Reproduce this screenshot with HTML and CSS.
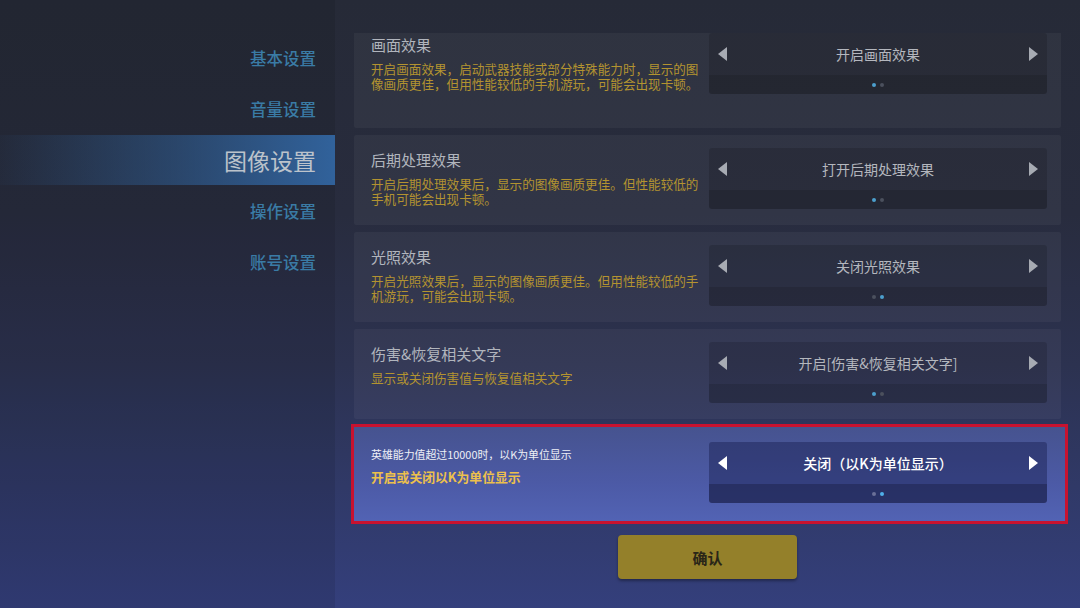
FILE: index.html
```html
<!DOCTYPE html>
<html lang="zh-CN">
<head>
<meta charset="UTF-8">
<meta name="viewport" content="width=device-width, initial-scale=1.0">
<title>设置 | 图像设置</title>
<link rel="stylesheet" href="styles.css">
</head>
<body>
<div class="layout">
<aside class="sidebar">
<nav class="nav">
<a class="nav-item" href="#">基本设置</a>
<a class="nav-item" href="#">音量设置</a>
<a class="nav-item active" href="#">图像设置</a>
<a class="nav-item" href="#">操作设置</a>
<a class="nav-item" href="#">账号设置</a>
</nav>
</aside>
<main class="panel">
<div class="settings-scroll">
<div class="settings-list">
<div class="setting tall">
<div class="setting-text">
<h3 class="setting-title">画面效果</h3>
<p class="setting-desc">开启画面效果，启动武器技能或部分特殊能力时，显示的图像画质更佳，但用性能较低的手机游玩，可能会出现卡顿。</p>
</div>
<div class="selector">
<div class="selector-main">
<svg class="arrow" viewBox="0 0 9 14"><polygon points="9,0 9,14 0,7"/></svg>
<span class="selector-value">开启画面效果</span>
<svg class="arrow" viewBox="0 0 9 14"><polygon points="0,0 0,14 9,7"/></svg>
</div>
<div class="selector-dots"><i class="dot on"></i><i class="dot"></i></div>
</div>
</div>
<div class="setting">
<div class="setting-text">
<h3 class="setting-title">后期处理效果</h3>
<p class="setting-desc">开启后期处理效果后，显示的图像画质更佳。但性能较低的手机可能会出现卡顿。</p>
</div>
<div class="selector">
<div class="selector-main">
<svg class="arrow" viewBox="0 0 9 14"><polygon points="9,0 9,14 0,7"/></svg>
<span class="selector-value">打开后期处理效果</span>
<svg class="arrow" viewBox="0 0 9 14"><polygon points="0,0 0,14 9,7"/></svg>
</div>
<div class="selector-dots"><i class="dot on"></i><i class="dot"></i></div>
</div>
</div>
<div class="setting">
<div class="setting-text">
<h3 class="setting-title">光照效果</h3>
<p class="setting-desc">开启光照效果后，显示的图像画质更佳。但用性能较低的手机游玩，可能会出现卡顿。</p>
</div>
<div class="selector">
<div class="selector-main">
<svg class="arrow" viewBox="0 0 9 14"><polygon points="9,0 9,14 0,7"/></svg>
<span class="selector-value">关闭光照效果</span>
<svg class="arrow" viewBox="0 0 9 14"><polygon points="0,0 0,14 9,7"/></svg>
</div>
<div class="selector-dots"><i class="dot"></i><i class="dot on"></i></div>
</div>
</div>
<div class="setting">
<div class="setting-text">
<h3 class="setting-title">伤害&amp;恢复相关文字</h3>
<p class="setting-desc">显示或关闭伤害值与恢复值相关文字</p>
</div>
<div class="selector">
<div class="selector-main">
<svg class="arrow" viewBox="0 0 9 14"><polygon points="9,0 9,14 0,7"/></svg>
<span class="selector-value">开启[伤害&amp;恢复相关文字]</span>
<svg class="arrow" viewBox="0 0 9 14"><polygon points="0,0 0,14 9,7"/></svg>
</div>
<div class="selector-dots"><i class="dot on"></i><i class="dot"></i></div>
</div>
</div>
<div class="setting selected">
<div class="setting-text">
<h3 class="setting-title">英雄能力值超过10000时，以K为单位显示</h3>
<p class="setting-desc">开启或关闭以K为单位显示</p>
</div>
<div class="selector">
<div class="selector-main">
<svg class="arrow" viewBox="0 0 9 14"><polygon points="9,0 9,14 0,7"/></svg>
<span class="selector-value">关闭（以K为单位显示）</span>
<svg class="arrow" viewBox="0 0 9 14"><polygon points="0,0 0,14 9,7"/></svg>
</div>
<div class="selector-dots"><i class="dot"></i><i class="dot on"></i></div>
</div>
</div>
</div>
</div>
<div class="actions">
<button type="button" class="confirm-btn">确认</button>
</div>
</main>
</div>
</body>
</html>
```

FILE: styles.css
```css
* {
margin: 0;
padding: 0;
box-sizing: border-box;
font-family: "Noto Sans CJK SC", "Noto Sans", sans-serif;
}
body {
height: 100vh;
overflow: hidden;
background: linear-gradient(180deg, #262a37 0%, #282c3e 35%, #2c3250 60%, #303967 80%, #343f7c 100%);
color: #b1b5bd;
}
.layout {
display: flex;
height: 100vh;
}
/* Left menu */
.sidebar {
width: 335px;
flex-shrink: 0;
background: rgba(0, 0, 0, 0.09);
}
.nav {
display: flex;
flex-direction: column;
padding-top: 33px;
}
.nav-item {
display: block;
height: 51px;
line-height: 51px;
padding-right: 19px;
text-align: right;
text-decoration: none;
font-size: 16.5px;
font-weight: 500;
color: #3a7ba5;
}
.nav-item.active {
height: 50px;
line-height: 50px;
margin-bottom: 1px;
font-size: 23px;
font-weight: 400;
color: #bcc3cb;
background: linear-gradient(90deg, rgba(48, 97, 153, 0.05) 0%, rgba(48, 97, 153, 0.55) 55%, #31629b 100%);
}
/* Settings list */
.panel {
flex: 1;
padding: 33px 10px 0 15px;
}
.settings-scroll {
overflow: hidden;
padding: 0 9px 0 4px;
}
.settings-list {
margin-top: -13px;
display: flex;
flex-direction: column;
gap: 7px;
}
.setting {
display: flex;
justify-content: space-between;
align-items: flex-start;
padding: 13px 14px 16px 17px;
background: rgba(255, 255, 255, 0.045);
border-radius: 2px;
}
.setting.tall {
padding-bottom: 34px;
}
.setting-text {
width: 332px;
margin-top: 2px;
}
.setting-title {
font-size: 15px;
font-weight: 400;
line-height: 20px;
color: #b1b5bd;
}
.setting-desc {
margin-top: 6px;
font-size: 12.6px;
line-height: 15px;
color: #b39330;
}
.setting.selected {
margin: -2px -7px 0 -3px;
padding: 15px 18px 18px 17px;
border: 3px solid #c8122f;
border-radius: 0;
background: linear-gradient(180deg, #46538f 0%, #4c5aa6 60%, #5263b4 100%);
}
.setting.selected .setting-text {
margin-top: 4px;
}
.setting.selected .setting-title {
font-size: 10.9px;
line-height: 16px;
color: #eef0f6;
}
.setting.selected .setting-desc {
margin-top: 7px;
font-size: 12.8px;
line-height: 16px;
font-weight: 700;
color: #ecc04c;
}
/* Option switcher */
.selector {
width: 338px;
flex-shrink: 0;
border-radius: 3px;
overflow: hidden;
}
.selector-main {
height: 42px;
display: flex;
align-items: center;
justify-content: space-between;
padding: 0 9px;
background: rgba(0, 0, 0, 0.14);
}
.arrow {
width: 9px;
height: 14px;
fill: #a7abb3;
}
.selector-value {
font-size: 14px;
color: #b4b7be;
}
.selector-dots {
height: 19px;
display: flex;
justify-content: center;
align-items: center;
gap: 4px;
background: rgba(0, 0, 0, 0.25);
}
.dot {
width: 4px;
height: 4px;
border-radius: 50%;
background: #4b505d;
}
.dot.on {
background: #4c9fcd;
}
.setting.selected .selector-main {
background: rgba(24, 30, 80, 0.45);
}
.setting.selected .selector-dots {
background: rgba(18, 22, 60, 0.62);
}
.setting.selected .arrow {
fill: #ffffff;
}
.setting.selected .selector-value {
font-size: 14px;
font-weight: 500;
color: #ffffff;
}
.setting.selected .dot {
background: #6a7098;
}
.setting.selected .dot.on {
background: #4fb0ea;
}
/* Confirm */
.actions {
display: flex;
justify-content: center;
margin-top: 11px;
padding-right: 5px;
}
.confirm-btn {
width: 179px;
height: 44px;
border: none;
border-radius: 4px;
background: #94802a;
box-shadow: 0 2px 3px rgba(0, 0, 0, 0.35);
color: #2a2618;
font-size: 15px;
font-weight: 700;
cursor: pointer;
}
```
